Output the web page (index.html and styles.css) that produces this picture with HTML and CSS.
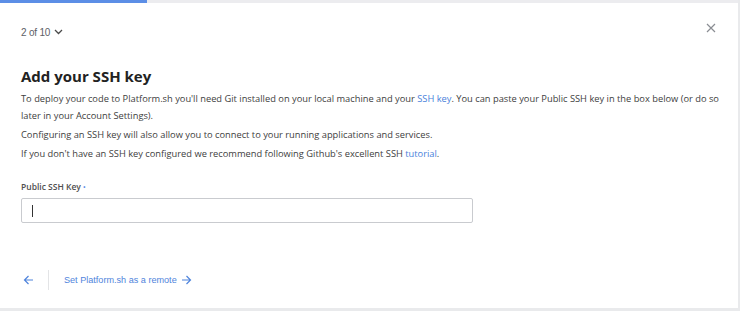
FILE: index.html
```html
<!DOCTYPE html>
<html lang="en">
    <head>
        <title>Add your SSH key</title>
        <link rel="stylesheet" href="styles.css">
    </head>
    <body>
        <div id="modal">
            <div class="progressTrack">
                <div class="progressFill"></div>
            </div>

            <div class="topRow">
                <span class="stepCount">2 of 10
                    <svg class="chevron" width="9" height="6" viewBox="0 0 9 6"><path d="M1 1l3.5 3.5L8 1" fill="none" stroke="#4a4a4a" stroke-width="1.3"/></svg>
                </span>
                <svg class="closeIcon" width="10" height="10" viewBox="0 0 10 10"><path d="M1 1l8 8M9 1l-8 8" stroke="#8a8d93" stroke-width="1.2"/></svg>
            </div>

            <div class="content">
                <h1 class="title">Add your SSH key</h1>
                <p class="bodyText">To deploy your code to Platform.sh you'll need Git installed on your local machine and your <a class="link">SSH key</a>. You can paste your Public SSH key in the box below (or do so later in your Account Settings).</p>
                <p class="bodyText">Configuring an SSH key will also allow you to connect to your running applications and services.</p>
                <p class="bodyText">If you don't have an SSH key configured we recommend following Github's excellent SSH <a class="link">tutorial</a>.</p>

                <label class="fieldLabel" for="sshKey">Public SSH Key <span class="required">&bull;</span></label>
                <div class="keyInput"><span class="caret"></span></div>
            </div>

            <div class="footer">
                <svg class="backArrow" width="11" height="10" viewBox="0 0 11 10"><path d="M10 5H1.5M5.5 1L1.5 5l4 4" fill="none" stroke="#4f84dc" stroke-width="1.2"/></svg>
                <span class="divider"></span>
                <a class="nextLink">Set Platform.sh as a remote
                    <svg width="11" height="10" viewBox="0 0 11 10"><path d="M1 5h8.5M5.5 1l4 4-4 4" fill="none" stroke="#4f84dc" stroke-width="1.2"/></svg>
                </a>
            </div>
        </div>
    </body>
</html>
```

FILE: styles.css
```css
body{
    margin: 0;
    background-color: #e9eaec;
    font-family: 'Open Sans', sans-serif;
}

#modal{
    width: 738px;
    height: 308px;
    background-color: #ffffff;
    display: flex;
    flex-direction: column;
}

.progressTrack{
    height: 3px;
    background-color: #ececef;
}

.progressFill{
    width: 147px;
    height: 3px;
    background-color: #5c8ee6;
}

.topRow{
    display: flex;
    justify-content: space-between;
    align-items: center;
    padding: 20px 22px 0 21px;
    height: 18px;
}

.stepCount{
    font-family: 'Liberation Sans', sans-serif;
    font-size: 10px;
    color: #5d6066;
    display: flex;
    align-items: center;
    gap: 4px;
    letter-spacing: -0.2px;
}

.closeIcon{
    margin-top: -8px;
}

.content{
    padding: 0 16px 0 21px;
}

.title{
    margin: 25px 0 4px 0;
    font-size: 15px;
    font-weight: 700;
    color: #222;
}

.bodyText{
    margin: 0 0 2px 0;
    font-size: 9.3px;
    line-height: 17px;
    color: #404040;
}

.link{
    color: #4a7fdb;
}

.fieldLabel{
    display: block;
    margin-top: 19px;
    font-size: 8.5px;
    font-weight: 600;
    color: #4f4f4f;
}

.required{
    color: #5c8ee6;
    font-size: 7px;
}

.keyInput{
    margin-top: 6px;
    width: 452px;
    height: 25px;
    border: 1px solid #c9cbcf;
    border-radius: 2px;
    display: flex;
    align-items: center;
    padding-left: 10px;
    box-sizing: border-box;
}

.caret{
    width: 1px;
    height: 12px;
    background-color: #333;
}

.footer{
    margin-top: 46px;
    display: flex;
    align-items: center;
    padding-left: 23px;
    height: 22px;
}

.divider{
    width: 1px;
    height: 20px;
    background-color: #e3e4e6;
    margin: 0 15px 0 14px;
}

.nextLink{
    font-family: 'Liberation Sans', sans-serif;
    font-size: 9.1px;
    color: #4f84dc;
    display: flex;
    align-items: center;
    gap: 4px;
}
```
